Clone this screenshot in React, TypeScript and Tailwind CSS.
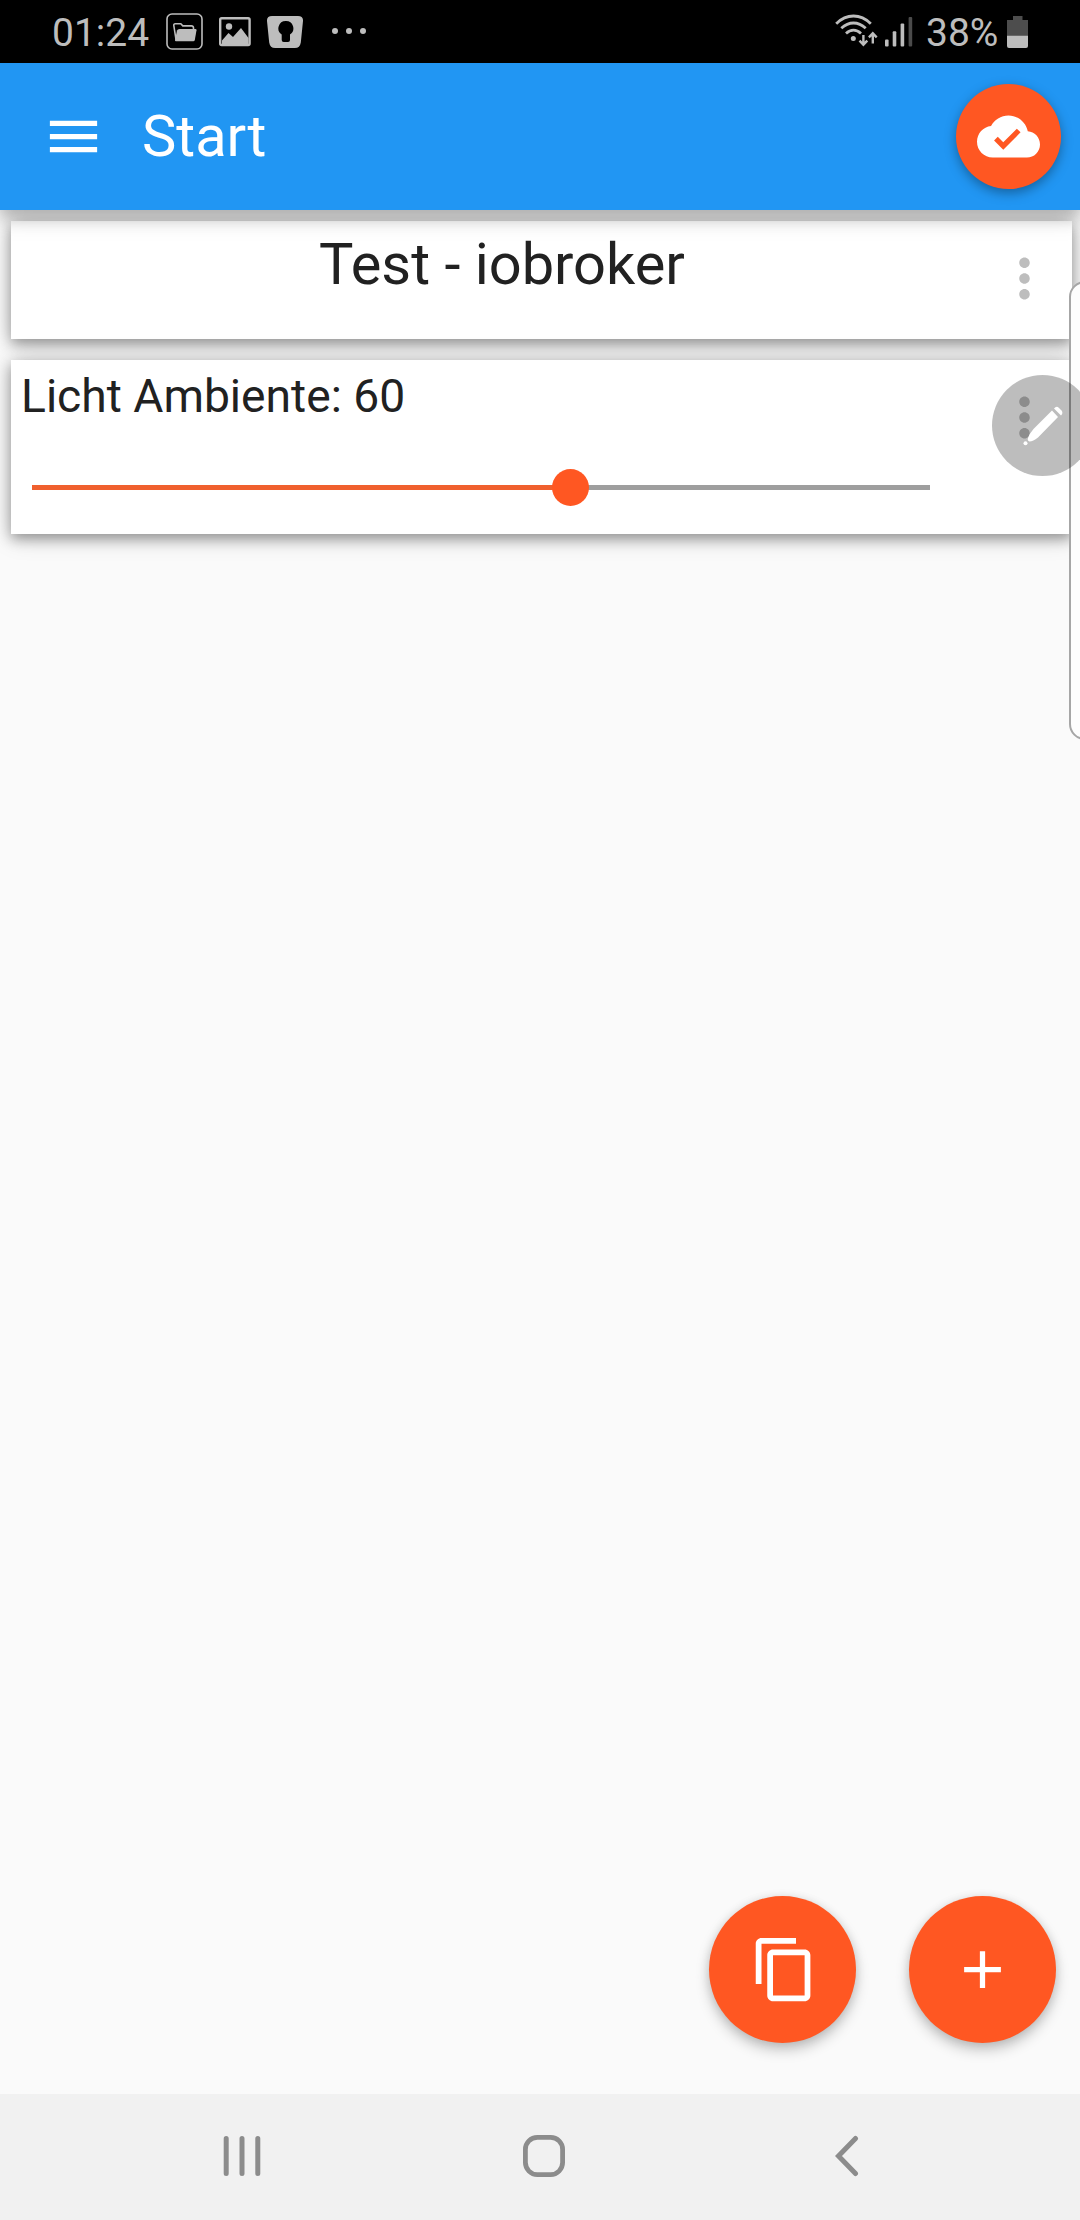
import React, { useState } from "react";

interface IconProps {
  path: string;
  className: string;
}

const menuPath = "M3 18h18v-2H3v2zm0-5h18v-2H3v2zm0-7v2h18V6H3z";
const cloudDonePath =
  "M19.35 10.04C18.67 6.59 15.64 4 12 4 9.11 4 6.6 5.64 5.35 8.04 2.34 8.36 0 10.91 0 14c0 3.31 2.69 6 6 6h13c2.76 0 5-2.24 5-5 0-2.64-2.05-4.78-4.65-4.96zM10 17l-3.5-3.5 1.41-1.41L10 14.17 15.18 9l1.41 1.41L10 17z";
const copyPath =
  "M16 1H4c-1.1 0-2 .9-2 2v14h2V3h12V1zm3 4H8c-1.1 0-2 .9-2 2v14c0 1.1.9 2 2 2h11c1.1 0 2-.9 2-2V7c0-1.1-.9-2-2-2zm0 16H8V7h11v14z";
const addPath = "M19 13h-6v6h-2v-6H5v-2h6V5h2v6h6v2z";
const morePath =
  "M12 8c1.1 0 2-.9 2-2s-.9-2-2-2-2 .9-2 2 .9 2 2 2zm0 2c-1.1 0-2 .9-2 2s.9 2 2 2 2-.9 2-2-.9-2-2-2zm0 6c-1.1 0-2 .9-2 2s.9 2 2 2 2-.9 2-2-.9-2-2-2z";

const Icon: React.FC<IconProps> = ({ path, className }) => (
  <svg viewBox="0 0 24 24" fill="currentColor" className={className}>
    <path d={path} />
  </svg>
);

const StatusBar: React.FC = () => (
  <div className="flex h-[63px] shrink-0 items-start justify-between bg-black pl-[52px] pr-[51px] text-[39px] text-[#bdbdbd]">
    <div className="flex items-start">
      <span className="w-[114px] pt-[10px] leading-[46px]">01:24</span>
      {/* Files */}
      <svg viewBox="0 0 37 37" className="mt-[13px] h-[37px] w-[37px]">
        <rect x="1" y="1" width="35" height="35" rx="5" fill="none" stroke="currentColor" strokeWidth="1.6" />
        <path
          d="M10 26.5 7.8 12.5q-.2-1.8 1.5-1.8h5.5l2 2.2h8.7q1.8 0 2 2v1.4"
          fill="none"
          stroke="currentColor"
          strokeWidth="1.6"
        />
        <path d="M13.500 16h16q1.200 0 1 1.200l-1.700 9.700q-.3 1.300-1.500 1.300H10q-1.200 0-1-1.200l2-9.500q.4-1.500 2.500-1.500z" fill="currentColor" />
      </svg>
      {/* Gallery */}
      <svg viewBox="0 0 32 30" className="ml-[16px] mt-[17px] h-[30px] w-[32px]">
        <rect x="1.2" y="1.2" width="29.4" height="26.8" rx="1.5" fill="none" stroke="currentColor" strokeWidth="2.4" />
        <circle cx="10" cy="9.5" r="3.2" fill="currentColor" />
        <path d="M3 23.5 9.5 16l4.500 4 8-9 7.500 10v6H3z" fill="currentColor" />
      </svg>
      {/* Lock */}
      <svg viewBox="0 0 36 33" className="ml-[16px] mt-[15px] h-[33px] w-[36px]">
        <path
          fillRule="evenodd"
          fill="currentColor"
          d="M5 1h26q5.300 0 5 5l-2.200 21.500q-.8 5.500-6 5.500H8.200q-5.200 0-6-5.500L0 6Q-.3 1 5 1zM18.700 6a7.300 7.300 0 0 0-4 13.400V25q0 2 2 2H21q2 0 2-2v-5.600A7.300 7.300 0 0 0 18.700 6z"
        />
      </svg>
      <span className="ml-[29px] mt-[28px] flex gap-[8px]">
        <i className="h-[6px] w-[6px] rounded-full bg-current" />
        <i className="h-[6px] w-[6px] rounded-full bg-current" />
        <i className="h-[6px] w-[6px] rounded-full bg-current" />
      </span>
    </div>
    <div className="flex items-start">
      {/* Wi-Fi with traffic arrows */}
      <svg viewBox="0 0 43 34" className="mt-[14px] h-[34px] w-[43px]" fill="none" stroke="currentColor">
        <g strokeWidth="2.8">
          <path d="M1.200 9.700Q9 2 18.500 2t17.300 7.700" />
          <path d="M6.300 14.300Q12 9 18.500 9t12.200 5.300" />
          <path d="M11 19.500q3.500-3.300 7.500-3.300t7.500 3.300" />
        </g>
        <circle cx="18.3" cy="24.5" r="2.5" fill="currentColor" stroke="none" />
        <path d="M28.400 21v9.500M24.500 26.700l3.900 4 3.900-4M37.800 29.500V20M33.900 23.300l3.900-4 3.900 4" strokeWidth="2.4" />
      </svg>
      {/* Signal */}
      <svg viewBox="0 0 29 31" className="ml-[6px] mt-[16px] h-[31px] w-[29px]" fill="currentColor">
        <rect x="1" y="23.5" width="3.6" height="7" rx="1" />
        <rect x="8.7" y="15.3" width="3.6" height="15.2" rx="1" />
        <rect x="16.6" y="7.5" width="3.6" height="23" rx="1" />
        <rect x="24.6" y="1" width="3.6" height="29.5" rx="1" className="fill-[#4b4b4b]" />
      </svg>
      <span className="ml-[13px] w-[81px] whitespace-nowrap pt-[10px] leading-[46px]">38%</span>
      {/* Battery */}
      <svg viewBox="0 0 22 33" className="mt-[15px] h-[33px] w-[22px]">
        <path d="M6 1h9.500v4H21v16H0V5h6z" className="fill-[#4d4d4d]" />
        <path d="M0 20.700h21V31q0 2-2 2H2q-2 0-2-2z" fill="currentColor" />
      </svg>
    </div>
  </div>
);

const AppBar: React.FC = () => (
  <header className="relative z-10 flex h-[147px] shrink-0 items-center bg-[#2196f3] pl-[42px] pr-[19px] text-white shadow-[0_8px_14px_rgba(0,0,0,0.2),0_6px_26px_rgba(0,0,0,0.14)]">
    <Icon path={menuPath} className="h-[63px] w-[63px]" />
    <h1 className="mb-[2px] ml-[37px] flex-1 text-[57.75px] leading-[68px]">Start</h1>
    <button className="flex h-[105px] w-[105px] items-center justify-center rounded-full bg-[#ff5722] shadow-[0_4px_12px_rgba(0,0,0,0.35)]">
      <Icon path={cloudDonePath} className="h-[63px] w-[63px]" />
    </button>
  </header>
);

const cardClass =
  "flex bg-white text-[#212121] shadow-[0_5px_12px_rgba(0,0,0,0.32),0_2px_24px_rgba(0,0,0,0.2)]";

const App: React.FC = () => {
  const [level] = useState<number>(60);

  return (
    <div className="relative flex h-[2220px] w-[1080px] flex-col overflow-hidden bg-[#fafafa] font-[Roboto,sans-serif]">
      <StatusBar />
      <AppBar />

      <main className="flex flex-1 flex-col gap-[21px] pl-[11px] pr-[8px] pt-[11px]">
        <section className={`${cardClass} h-[118px] pr-[16px]`}>
          <h2 className="flex-1 pt-[9px] text-center text-[57.75px] leading-[68px]">
            Test - iobroker
          </h2>
          <Icon path={morePath} className="mt-[26px] h-[63px] w-[63px] text-[#bdbdbd]" />
        </section>

        <section className={`${cardClass} relative h-[174px] pr-[16px]`}>
          <div className="flex-1">
            <p className="pl-[10px] pt-[9px] text-[46.2px] leading-[54px]">
              Licht Ambiente: {level}
            </p>
            <div className="ml-[21px] mt-[45px] flex h-[38px] w-[898px] items-center">
              <div className="h-[5px] bg-[#f0602e]" style={{ width: `${level}%` }} />
              <div className="relative -mx-[18.5px] h-[37px] w-[37px] shrink-0 rounded-full bg-[#ff5722]" />
              <div className="h-[5px] flex-1 bg-[#9e9e9e]" />
            </div>
          </div>
          <Icon path={morePath} className="mt-[26px] h-[63px] w-[63px] text-[#bdbdbd]" />
        </section>

        <div className="mb-[51px] mr-[16px] mt-auto flex justify-end gap-[53px] text-white">
          <button className="flex h-[147px] w-[147px] items-center justify-center rounded-full bg-[#ff5722] shadow-[0_7px_14px_rgba(0,0,0,0.22),0_1px_10px_rgba(0,0,0,0.1)]">
            <Icon path={copyPath} className="ml-[3px] h-[69px] w-[69px]" />
          </button>
          <button className="flex h-[147px] w-[147px] items-center justify-center rounded-full bg-[#ff5722] shadow-[0_7px_14px_rgba(0,0,0,0.22),0_1px_10px_rgba(0,0,0,0.1)]">
            <Icon path={addPath} className="h-[63px] w-[63px]" />
          </button>
        </div>
      </main>

      <nav className="flex h-[126px] shrink-0 items-center bg-[#f1f1f1] pb-[2px] pl-[223px] text-[#8c8c8c]">
        <svg viewBox="0 0 38 42" className="h-[42px] w-[38px]" stroke="currentColor" strokeWidth="5" strokeLinecap="round">
          <path d="M3.200 3.500v35M19 3.500v35M34.800 3.500v35" />
        </svg>
        <svg viewBox="0 0 42 42" className="ml-[262px] h-[42px] w-[42px]" fill="none" stroke="currentColor" strokeWidth="4.8">
          <rect x="2.4" y="2.4" width="37.2" height="37.2" rx="12" />
        </svg>
        <svg viewBox="0 0 24 42" className="ml-[270px] h-[42px] w-[24px]" fill="none" stroke="currentColor" strokeWidth="5" strokeLinecap="round">
          <path d="M20.500 3.500 3.500 21l17 17.500" />
        </svg>
      </nav>

      {/* Edge panel handle */}
      <div className="absolute left-[1069px] top-[281px] z-20 h-[459px] w-[40px] rounded-[16px] border-2 border-[#a6a6a6] bg-[#fdfdfd]" />

      {/* Floating pen */}
      <div className="absolute left-[992px] top-[375px] z-30 flex h-[101px] w-[101px] items-center justify-center rounded-full bg-black/26">
        <svg viewBox="0 0 101 101" className="h-[101px] w-[101px]" fill="#fff">
          <path d="M60 35.500 66 42 46 62.500Q41 66.500 37.500 66.500 35 65.500 36 63 37.500 58.500 41.500 54z" />
          <path d="M62 33.500Q64.500 30.500 67 33L69.500 35.500Q71.500 38 69 40.500z" />
          <circle cx="33.5" cy="68.2" r="2" />
        </svg>
      </div>
    </div>
  );
};

export default App;
